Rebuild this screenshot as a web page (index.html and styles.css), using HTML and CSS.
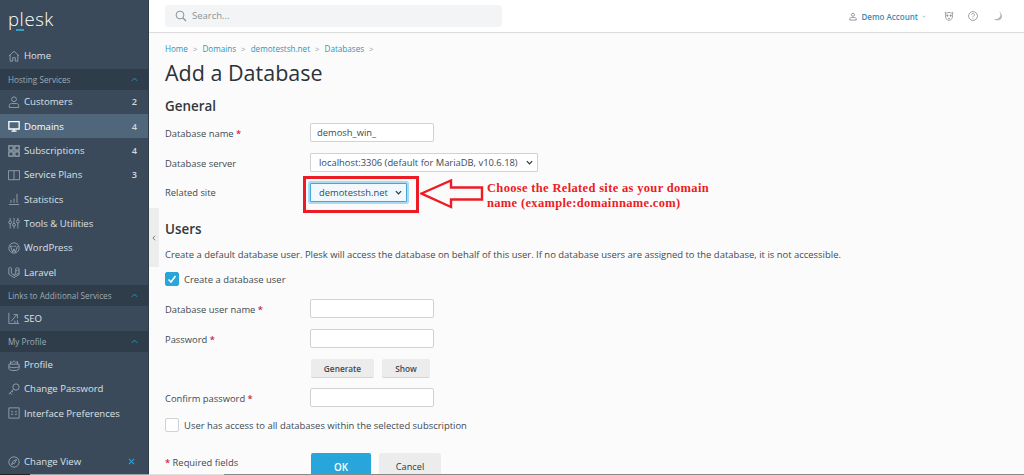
FILE: index.html
```html
<!DOCTYPE html>
<html lang="en">
<head>
<meta charset="utf-8">
<title>Add a Database</title>
<link rel="stylesheet" href="styles.css">
</head>
<body>
<div class="app">
  <aside class="sidebar">
    <div class="logo"><span>plesk</span><i class="logo-bar"></i></div>
    <nav class="nav">
      <a class="item"><svg class="ico" viewBox="0 0 14 14"><path d="M1 7 7 1.500 13 7M2.500 6v7h3V9h3v4h3V6"/></svg>Home</a>
      <div class="group">Hosting Services<svg class="caret" viewBox="0 0 8 5"><path d="M1 4 4 1l3 3"/></svg></div>
      <a class="item"><svg class="ico" viewBox="0 0 14 14"><circle cx="7" cy="3.800" r="2.800"/><path d="M1.500 13.500v-2.500C1.500 9.500 3 8.800 4 8.800h6c1 0 2.500.7 2.500 2.200v2.500z"/></svg>Customers<b>2</b></a>
      <a class="item active"><svg class="ico mono" viewBox="0 0 14 14"><path d="M1 2h12v8.500H1zM4 13h6M7 10.500V13"/></svg>Domains<b>4</b></a>
      <a class="item"><svg class="ico bold" viewBox="0 0 14 14"><path d="M1 1h5v5H1zM8 1h5v5H8zM1 8h5v5H1zM8 8h5v5H8z"/></svg>Subscriptions<b>4</b></a>
      <a class="item"><svg class="ico" viewBox="0 0 14 14"><path d="M.5 2h13v10.500H.5zM7 2v10.500"/></svg>Service Plans<b>3</b></a>
      <a class="item"><svg class="ico" viewBox="0 0 14 14"><path d="M1 13.500h12M3.500 11.500V8M7 11.500V6.500M10.500 11.500V1"/></svg>Statistics</a>
      <a class="item"><svg class="ico" viewBox="0 0 14 14"><path d="M2.500 1v3.500M2.500 8v5.500M7 1v6.500M7 11v2.500M11.500 1v2.500M11.500 7v6.500"/><circle cx="2.500" cy="6.200" r="1.700"/><circle cx="7" cy="9.200" r="1.700"/><circle cx="11.500" cy="5.200" r="1.700"/></svg>Tools &amp; Utilities</a>
      <a class="item"><svg class="ico" viewBox="0 0 14 14"><circle cx="7" cy="7" r="6"/><path d="M3 5l2.500 7L7 8l1.500 4L11 5M2.500 5h3M6.500 5h3"/></svg>WordPress</a>
      <a class="item"><svg class="ico" viewBox="0 0 14 14"><path d="M1 2.500 3 1.500l1 1v6L7.500 11 13 8V6l-2-1-2 1v2.500L6 10.500M1 2.500V9.500L7 13.500 13 10V8M9 6V3l2-1 2 1v3"/></svg>Laravel</a>
      <div class="group">Links to Additional Services<svg class="caret" viewBox="0 0 8 5"><path d="M1 4 4 1l3 3"/></svg></div>
      <a class="item"><svg class="ico" viewBox="0 0 14 14"><path d="M1 1v12.500h12M3.500 11 10 3.500M6.500 3H11v4.500M8 13v-3M11 13V9.500"/></svg>SEO</a>
      <div class="group">My Profile<svg class="caret" viewBox="0 0 8 5"><path d="M1 4 4 1l3 3"/></svg></div>
      <a class="item"><svg class="ico" viewBox="0 0 14 14"><path d="M1 6h12v5c0 1.500-2.500 2.500-6 2.500S1 12.500 1 11zM3 6V3l2 1.200L7 2l2 2.200L11 3v3M1 9c3 1.500 9 1.500 12 0"/></svg>Profile</a>
      <a class="item"><svg class="ico" viewBox="0 0 14 14"><circle cx="9.300" cy="4.700" r="3.700"/><path d="M6.500 7.500 1 13M2.500 11.500 4.500 13.500M4.500 9.500 6 11"/></svg>Change Password</a>
      <a class="item"><svg class="ico" viewBox="0 0 14 14"><path d="M1 1h12v12H1zM3.500 5.500h2.500M8 5.500h2.500M3.500 8.500h2.500M8 8.500h2.500" /></svg>Interface Preferences</a>
    </nav>
    <a class="item change"><svg class="ico" viewBox="0 0 14 14"><circle cx="7" cy="7" r="6"/><path d="M4 10 6 6l4-2-2 4z"/></svg>Change View<svg class="close" viewBox="0 0 8 8"><path d="M1 1l6 6M7 1 1 7"/></svg></a>
  </aside>
  <div class="main">
    <header class="topbar">
      <div class="search"><svg class="search-ico" viewBox="0 0 12 12"><circle cx="5" cy="5" r="3.900"/><path d="M8 8l3 3" stroke-width="1.300"/></svg>Search...</div>
      <div class="account">
        <svg class="user-ico" viewBox="0 0 10 10"><circle cx="5" cy="2.800" r="1.900"/><path d="M1 9.500V8c0-1 1-1.800 2-1.800h4c1 0 2 .8 2 1.800v1.500z"/></svg>
        <span class="account-name">Demo Account</span>
        <svg class="account-caret" viewBox="0 0 6 4"><path d="M.8.800 3 3 5.200.8"/></svg>
      </div>
      <svg class="top-ico bear" viewBox="0 0 12 12"><path d="M1.500 1.500 3 2.500c2-1 4-1 6 0l1.500-1-.3 4c.5 3-1.700 5.700-4.200 5.700S1.300 8.500 1.800 5.500z"/><circle cx="4" cy="5.500" r="1.300" class="solid"/><circle cx="8" cy="5.500" r="1.300" class="solid"/><circle cx="6" cy="9" r="1" class="solid"/></svg>
      <svg class="top-ico help" viewBox="0 0 12 12"><circle cx="6" cy="6" r="5.300"/><path d="M4.300 4.700C4.300 3.500 5 3 6 3s1.800.6 1.800 1.500S6 6 6 7.300M6 8.300v1"/></svg>
      <svg class="top-ico moon" viewBox="0 0 12 12"><path class="moon-fill" d="M7 .5c2.500 2 3 6-1 8.500-2 1-4 .7-5 .3 1.500 2 5 2.700 7.500 1.200C12 8.500 11.500 2.500 7 .5z"/></svg>
    </header>
    <main class="content">
      <div class="crumbs"><a>Home</a><span>&gt;</span><a>Domains</a><span>&gt;</span><a>demotestsh.net</a><span>&gt;</span><a>Databases</a><span>&gt;</span></div>
      <h1>Add a Database</h1>
      <h2>General</h2>
      <div class="row r-name"><label>Database name <em>*</em></label><div class="input">demosh_win_</div></div>
      <div class="row r-server"><label>Database server</label><div class="select wide">localhost:3306 (default for MariaDB, v10.6.18)<svg viewBox="0 0 8 5"><path d="M1 1l3 3 3-3"/></svg></div></div>
      <div class="row r-site"><label>Related site</label><div class="select focus">demotestsh.net<svg viewBox="0 0 8 5"><path d="M1 1l3 3 3-3"/></svg></div></div>
      <h2 class="users">Users</h2>
      <p class="hint">Create a default database user. Plesk will access the database on behalf of this user. If no database users are assigned to the database, it is not accessible.</p>
      <div class="check-row"><span class="check on"><svg viewBox="0 0 12 12"><path d="M2.500 6.500 5 9l4.500-6"/></svg></span>Create a database user</div>
      <div class="row r-user"><label>Database user name <em>*</em></label><div class="input"></div></div>
      <div class="row r-pass"><label>Password <em>*</em></label><div class="input"></div></div>
      <div class="row r-gen"><label></label><button class="btn small gen">Generate</button><button class="btn small show">Show</button></div>
      <div class="row r-conf"><label>Confirm password <em>*</em></label><div class="input"></div></div>
      <div class="check-row all"><span class="check"></span>User has access to all databases within the selected subscription</div>
      <div class="row r-foot"><label><em>*</em> Required fields</label><button class="btn ok">OK</button><button class="btn cancel">Cancel</button></div>
    </main>
    <button class="handle"><svg viewBox="0 0 5 8"><path d="M4 1 1 4l3 3"/></svg></button>
    <div class="callout-box"></div>
    <svg class="callout-arrow" viewBox="0 0 64 30"><path d="M1.500 14.500 31 1.500v7h31v12H31V28z"/></svg>
    <p class="callout-text">Choose the Related site as your domain<br>name (example:domainname.com)</p>
  </div>
</div>
<div class="bottom-line"></div>
</body>
</html>
```
FILE: styles.css
```css
* { box-sizing: border-box; }
html, body { margin: 0; height: 475px; overflow: hidden; }
body { font-family: "Open Sans", "Noto Sans", sans-serif; font-size: 9.500px; color: #3e4a52; background: #fbfbfb; }
svg { display: block; fill: none; stroke: currentColor; stroke-width: 1; }
.app { display: flex; height: 475px; overflow: hidden; }

.sidebar { width: 149px; flex: none; display: flex; flex-direction: column; background: #3a4a5b; border-right: 1px solid #2f3c49; color: #d9dfe4; }
.logo { height: 43.5px; flex: none; padding: 4px 0 0 8px; position: relative; color: #fff; font-size: 18.500px; font-weight: 300; line-height: 30px; letter-spacing: .6px; }
.logo-bar { position: absolute; left: 16px; top: 29px; width: 8px; height: 2px; background: #2fa0c6; }
.nav { flex: 1; }
.item { display: flex; align-items: center; height: 24.3px; padding: 0 11px 0 8px; font-size: 9.600px; color: #dbe1e6; }
.item b { margin-left: auto; font-weight: 600; font-size: 9.200px; color: #d0d7dd; }
.item.active { background: #4f667b; color: #fff; }
.ico { width: 12px; height: 12px; margin-right: 4px; flex: none; color: #9aa7b2; }
.mono { color: #fff; stroke-width: 1.500; }
.bold { stroke-width: 1.400; }
.group { display: flex; align-items: center; height: 21.2px; margin-top: .8px; padding: 0 10px 0 8px; background: #2f3d4b; color: #9eabb6; font-size: 8.200px; white-space: nowrap; }
.caret { width: 7px; height: 5px; margin-left: auto; color: #2fa0c6; }
.change { margin-bottom: 1px; }
.close { width: 7px; height: 7px; margin-left: auto; margin-right: 2px; color: #2f9fd6; stroke-width: 1.300; }

.main { flex: 1; min-width: 0; position: relative; display: flex; flex-direction: column; }
.topbar { height: 33px; flex: none; display: flex; align-items: center; padding: 0 21px 0 16px; background: #fff; border-bottom: 1px solid #dcdcdc; }
.search { width: 337px; height: 22px; margin-top: -1px; display: flex; align-items: center; padding-left: 10px; background: #f3f4f5; border-radius: 3px; color: #8b9298; font-size: 9.500px; }
.search-ico { width: 12px; height: 12px; margin-right: 5px; color: #8b9298; }
.account { margin-left: auto; display: flex; align-items: center; margin-right: 18px; }
.user-ico { width: 8px; height: 9px; margin-right: 4px; color: #7d868d; }
.account-name { font-size: 8px; font-weight: 600; color: #3b8cb0; }
.account-caret { width: 4px; height: 3px; margin-left: 4px; color: #9aa1a7; }
.top-ico { width: 10px; height: 10px; color: #8a9095; }
.help { margin-left: 14px; }
.moon { margin-left: 15px; }
.moon-fill { fill: #b5b9bc; stroke: none; }
.solid { fill: #8a9095; stroke: none; }

.content { flex: 1; padding: 0 0 0 16px; min-height: 0; }
.crumbs { display: flex; align-items: center; height: 13px; margin-top: 9px; font-size: 8.100px; color: #2d95bd; }
.crumbs span { margin: 0 5px; color: #9aa1a7; font-size: 8px; }
h1 { margin: 3px 0 0; font-size: 21.500px; font-weight: 400; line-height: 30px; color: #2c3238; }
h2 { margin: 8px 0 0; font-size: 13.400px; font-weight: 600; line-height: 20px; color: #31383e; }
.row { display: flex; align-items: center; font-size: 9.400px; }
.row label { width: 145px; flex: none; padding-top: 1px; }
.r-site label { padding-top: 0; }
em { font-style: normal; color: #c8283c; font-weight: 600; }
.input { width: 124px; height: 19px; display: flex; align-items: center; padding-left: 6px; background: #fff; border: 1px solid #cfd3d6; border-radius: 2px; font-size: 9.400px; color: #3e4a52; }
.select { height: 19px; display: flex; align-items: center; justify-content: space-between; padding: 0 4px 0 8px; background: #fff; border: 1px solid #cfd3d6; border-radius: 1px; font-size: 9.400px; color: #3e4a52; white-space: nowrap; }
.select svg { width: 7px; height: 5px; stroke-width: 1.400; color: #333; flex: none; }
.wide { width: 228px; }
.focus { width: 97px; height: 19px; background: #f1f9fe; border-color: #45a6d8; box-shadow: 0 0 0 2px #a9d9f3; }
.r-name { margin-top: 7px; }
.r-server { margin-top: 11px; }
.r-site { margin-top: 11px; }
.users { margin-top: 17px; }
.hint { margin: 9px 0 0; font-size: 9.450px; line-height: 14px; white-space: nowrap; }
.check-row { display: flex; align-items: center; font-size: 9.450px; margin-top: 10px; }
.check { width: 14px; height: 14px; margin-right: 5px; border: 1px solid #cfd3d6; border-radius: 2px; background: #fff; flex: none; }
.check.on { background: #28a6dc; border-color: #28a6dc; color: #fff; }
.check.on svg { stroke-width: 1.500; }
.r-user { margin-top: 13px; }
.r-pass { margin-top: 11px; }
.r-gen { margin-top: 11px; }
.r-conf { margin-top: 10px; }
.all { margin-top: 11px; }
.r-foot { margin-top: 21px; align-items: flex-start; }
.r-foot label { margin-top: 3px; padding-top: 0; }
.btn { border: 0; padding: 0; font-family: inherit; border-radius: 2px; background: #ececec; border-bottom: 1px solid #d4d4d4; color: #3e4a52; text-align: center; flex: none; }
.small { height: 19px; font-size: 8.300px; font-weight: 600; }
.gen { width: 63px; margin-left: 1px; }
.show { width: 48px; margin-left: 8px; }
.ok { width: 60px; height: 30px; margin-left: 1px; padding-bottom: 2px; background: #28a6dc; border-bottom: 0; color: #fff; font-size: 9.800px; font-weight: 600; }
.cancel { width: 62px; height: 30px; margin-left: 8px; padding-bottom: 2px; font-size: 9.200px; font-weight: 500; color: #2f363c; }

.handle { position: absolute; left: 0; top: 208px; width: 10px; height: 59px; padding: 0; border: 0; background: #ededed; border-radius: 0 2px 2px 0; display: flex; align-items: center; justify-content: center; color: #555; }
.handle svg { width: 4px; height: 6px; }
.callout-box { position: absolute; left: 154px; top: 176px; width: 116px; height: 37px; border: 3px solid #ed1c24; }
.callout-arrow { position: absolute; left: 271px; top: 179px; width: 64px; height: 30px; color: #ed1c24; stroke-width: 2.400; }
.callout-text { position: absolute; left: 338px; top: 181px; margin: 0; font-family: "Liberation Serif", serif; font-weight: 700; font-size: 12.500px; letter-spacing: .33px; line-height: 14.500px; color: #ed1c24; white-space: nowrap; }
.bottom-line { position: absolute; left: 0; right: 0; top: 474px; height: 1px; background: linear-gradient(to right, #222 30px, #9aa3ab 30px, #9aa3ab 149px, #e2e2e2 149px, #e2e2e2 224px, #8a8a8a 224px); }
```
